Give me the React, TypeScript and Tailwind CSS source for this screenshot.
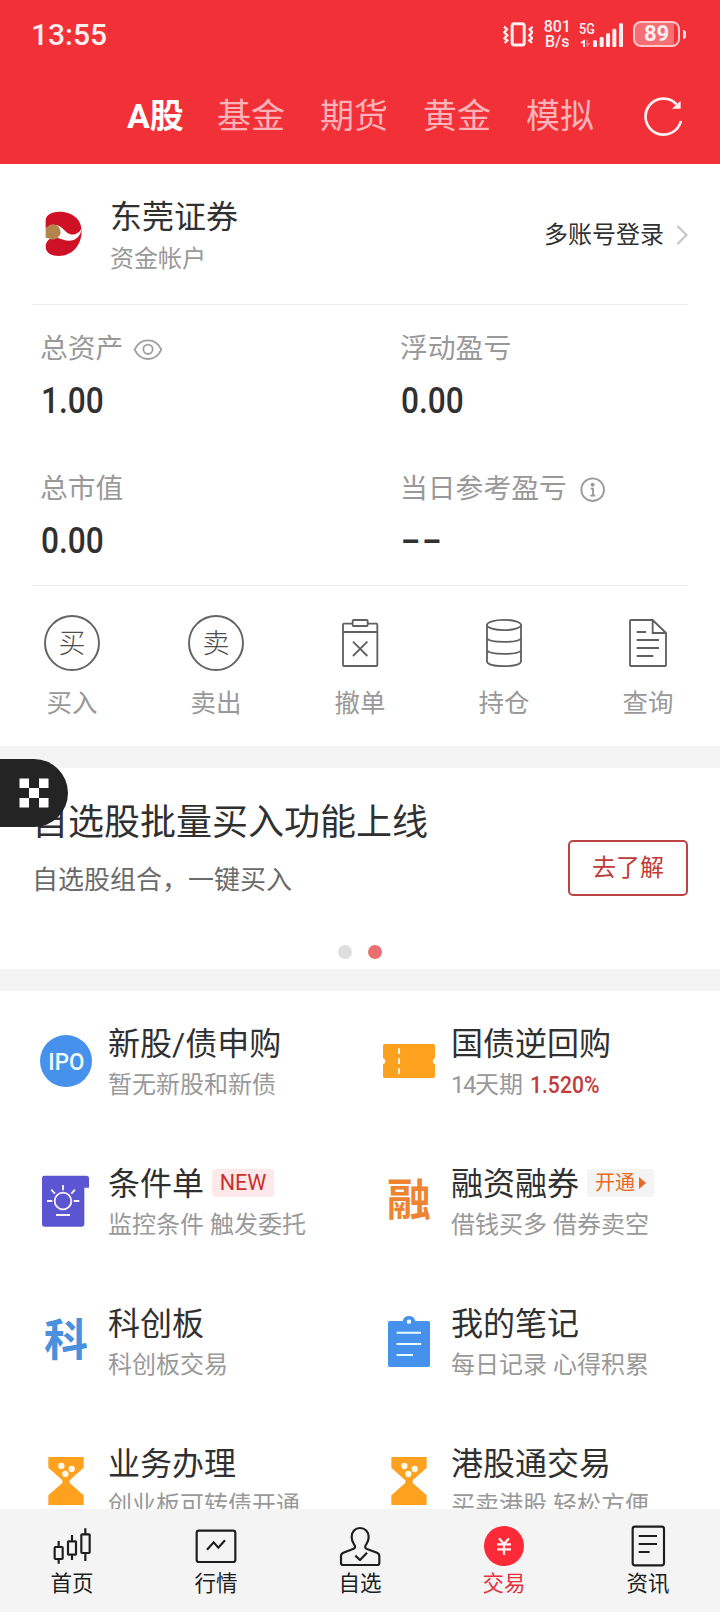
import type { ReactNode } from "react";
import clsx from "clsx";

/* ---------- header icons ---------- */

function VibrateIcon() {
  return (
    <svg viewBox="430 62 92 80" className="h-[26.7px] w-[30.7px]" fill="none" stroke="#ffeef0">
      <rect x="457.500" y="70" width="36" height="64" rx="6" strokeWidth="9" />
      <path d="M433 79l9 8-8 9 9 9-9 9 9 6-8 8" strokeWidth="7" />
      <path d="M519 79l-9 8 8 9-9 9 9 9-9 6 8 8" strokeWidth="7" />
    </svg>
  );
}

function SignalBars() {
  return (
    <svg viewBox="660 60 134 80" className="h-[26.7px] w-[44.7px]" fill="#ffeef0">
      <rect x="702" y="118" width="12" height="20" rx="4" />
      <rect x="722" y="108" width="12" height="30" rx="4" />
      <rect x="741" y="97" width="12" height="41" rx="4" />
      <rect x="760" y="83" width="12" height="55" rx="4" />
      <rect x="780" y="67" width="12" height="71" rx="4" />
      <path d="M678 138h-6v-11h-9l11-11h4z" />
      <path d="M682 116h4v10h9l-10 11h-3z" opacity=".4" />
    </svg>
  );
}

function RefreshIcon() {
  return (
    <svg viewBox="850 284 124 124" className="h-[41.3px] w-[41.3px]" fill="none">
      <path d="M951 312A54 54 0 1 0 964 362" stroke="#fff0f1" strokeWidth="8" />
      <path d="M963 301v24h-26z" fill="#fff0f1" />
    </svg>
  );
}

/* ---------- account icons ---------- */

function BrokerLogo() {
  return (
    <svg viewBox="136 123 112 138" className="h-[46px] w-[37.3px]">
      <path
        d="M138 176v-24c0-16 16-27 40-27 38 0 67 22 67 52-8 14-22 20-35 15-18-7-23-27-45-27-12 0-21 4-27 11z"
        fill="#cf1126"
      />
      <path
        d="M138 230c0-17 12-27 30-27 14 0 22 9 40 9 20 0 34-12 38-35 2 48-28 81-68 81-26 0-40-12-40-28z"
        fill="#cf1126"
      />
      <path d="M138 178a23 23 0 1 1 9 27l-9-2z" fill="#b4854a" />
    </svg>
  );
}

function EyeIcon() {
  return (
    <svg
      viewBox="402 505 90 70"
      className="mt-0.5 ml-2.5 h-[23.3px] w-[30px]"
      fill="none"
      stroke="#a0a0a0"
      strokeWidth="5.500"
    >
      <path d="M407 540c8-18 22-28 40-28s32 10 40 28c-8 18-22 28-40 28s-32-10-40-28z" />
      <circle cx="447" cy="539" r="14" />
    </svg>
  );
}

function InfoIcon() {
  return (
    <svg
      viewBox="664 109 76 76"
      className="mt-px ml-[13px] h-[25.3px] w-[25.3px]"
      fill="none"
      stroke="#999"
      strokeWidth="5.500"
    >
      <circle cx="702" cy="147" r="34" />
      <circle cx="702" cy="132" r="6" fill="#999" stroke="none" />
      <path d="M696 144h7v20M695 165h15" />
    </svg>
  );
}

/* ---------- quick action icons ---------- */

function CircleGlyph({ char }: { char: string }) {
  return (
    <div className="flex h-14 w-14 items-center justify-center rounded-full border-2 border-[#666] pt-0.5 text-[27px] leading-none font-light text-[#4c4c4c]">
      {char}
    </div>
  );
}

function CancelIcon() {
  return (
    <svg viewBox="996 525 168 168" className="h-14 w-14" fill="none" stroke="#606060" strokeWidth="5.500">
      <path d="M1058 551h-26q-3 0-3 3v121q0 3 3 3h97q3 0 3-3V554q0-3-3-3h-26M1029 576h103" />
      <rect x="1058" y="540" width="45" height="18" rx="3" />
      <path d="M1059 605l43 43M1102 605l-43 43" />
    </svg>
  );
}

function HoldingsIcon() {
  return (
    <svg viewBox="348 525 168 168" className="h-14 w-14" fill="none" stroke="#606060" strokeWidth="5.500">
      <ellipse cx="432" cy="555" rx="51" ry="15.500" />
      <path d="M381 555v110c6 18 96 18 102 0V555M381 595c8 14 94 14 102 0M381 631c8 14 94 14 102 0" />
    </svg>
  );
}

function QueryIcon() {
  return (
    <svg viewBox="780 525 168 168" className="h-14 w-14" fill="none" stroke="#606060" strokeWidth="5.500">
      <path d="M878 540h-65q-3 0-3 3v132q0 3 3 3h102q3 0 3-3v-96zM878 540v39h40" />
      <path d="M830 576h28M830 600h67M830 624h67M830 648h50" />
    </svg>
  );
}

/* ---------- service icons ---------- */

function IpoIcon() {
  return (
    <div className="flex h-[52px] w-[52px] items-center justify-center rounded-full bg-[#4691ec] pt-0.5 text-[24px] font-medium text-[#eefcff]">
      <span className="inline-block scale-x-[.93]">IPO</span>
    </div>
  );
}

function ConditionIcon() {
  return (
    <svg viewBox="120 553 156 156" className="h-[52px] w-[52px]">
      <path d="M133 555h126q8 0 8 8v28h-14v110q0 7-7 7H133q-7 0-7-7V562q0-7 7-7z" fill="#5b55d2" />
      <g fill="none" stroke="#f6f5ff" strokeWidth="5.500">
        <circle cx="189" cy="631" r="25" />
        <path d="M168 673h42M189 583v16M154 597l11 12M225 597l-11 12M141 631h16M221 631h17" />
      </g>
    </svg>
  );
}

function TicketIcon() {
  return (
    <svg viewBox="69 135 156 156" className="h-[52px] w-[52px]">
      <path
        d="M74 162h146q5 0 5 5v37a10 10 0 0 0 0 19v36q0 5-5 5H74q-5 0-5-5v-36a10 10 0 0 0 0-19v-37q0-5 5-5z"
        fill="#fea11f"
      />
      <path d="M117 175v17M117 205v17M117 235v17" stroke="#fff4d8" strokeWidth="6" />
    </svg>
  );
}

function NoteIcon() {
  return (
    <svg viewBox="69 195 156 156" className="h-[52px] w-[52px]">
      <path
        d="M89 213h39a19.500 19.500 0 0 1 38 0h39q5 0 5 5v128q0 5-5 5H89q-5 0-5-5V218q0-5 5-5z"
        fill="#4691ec"
      />
      <circle cx="147" cy="215" r="6.500" fill="#fff" />
      <path d="M110 248h73M110 282h73M110 315h49" stroke="#e8fdff" strokeWidth="6" />
    </svg>
  );
}

function HourglassIcon() {
  return (
    <svg viewBox="119 615 156 156" className="h-[52px] w-[52px]">
      <path d="M144 621h106v32l-42 38v8l42 37v29H144v-29l42-37v-8l-42-38z" fill="#fea11f" />
      <g fill="#fff8e4">
        <circle cx="183" cy="648" r="9.500" />
        <circle cx="214" cy="657" r="9.500" />
        <circle cx="195" cy="672" r="9.500" />
      </g>
    </svg>
  );
}

function GlyphIcon({ char, className }: { char: string; className: string }) {
  return (
    <div className={clsx("flex h-[52px] w-[52px] items-center justify-center text-[44px] leading-none font-bold", className)}>
      {char}
    </div>
  );
}

/* ---------- tab bar icons ---------- */

function HomeIcon() {
  return (
    <svg viewBox="144 816 144 144" className="h-12 w-12" fill="none" stroke="#1e1e1e" strokeWidth="6.500">
      <rect x="164" y="891" width="24" height="36" rx="2" />
      <rect x="204" y="874" width="24" height="40" rx="2" />
      <rect x="244" y="853" width="25" height="56" rx="2" />
      <path d="M176 873v18M176 927v14M216 855v19M216 914v16M256 835v18M256 909v24" />
    </svg>
  );
}

function MarketIcon() {
  return (
    <svg viewBox="576 816 144 144" className="h-12 w-12" fill="none" stroke="#1e1e1e" strokeWidth="6.500">
      <rect x="590" y="842" width="116" height="94" rx="7" />
      <path d="M621 899l20-22 14 16 20-22" />
    </svg>
  );
}

function WatchIcon() {
  return (
    <svg viewBox="1008 816 144 144" className="h-12 w-12" fill="none" stroke="#1e1e1e" strokeWidth="6.500" strokeLinejoin="round">
      <path d="M1080 834c15 0 26 11 26 27 0 14-5 18-9 25-3 5-1 9 4 11l30 11c5 2 7 5 7 10v21q0 6-6 6h-103q-6 0-6-6v-21c0-5 2-8 7-10l29-11c6-2 8-6 5-11-4-7-9-11-9-25 0-16 10-27 25-27z" />
      <path d="M1066 917l14 13 21-22" />
    </svg>
  );
}

function TradeIcon() {
  return (
    <svg viewBox="360 816 144 144" className="h-12 w-12">
      <circle cx="432" cy="888" r="60" fill="#fc2a38" />
      <path
        d="M417 865l15 17 15-17M432 882v33M411 883h42M411 898h42"
        fill="none"
        stroke="#fff0f0"
        strokeWidth="7"
      />
    </svg>
  );
}

function NewsIcon() {
  return (
    <svg viewBox="792 816 144 144" className="h-12 w-12" fill="none" stroke="#1e1e1e" strokeWidth="6.500">
      <rect x="818" y="830" width="94" height="116" rx="7" />
      <path d="M836 858h55M836 882h55M836 906h33" />
    </svg>
  );
}

/* ---------- data ---------- */

const tabs = ["基金", "期货", "黄金", "模拟"];

const quickActions = [
  { label: "买入", icon: <CircleGlyph char="买" /> },
  { label: "卖出", icon: <CircleGlyph char="卖" /> },
  { label: "撤单", icon: <CancelIcon /> },
  { label: "持仓", icon: <HoldingsIcon /> },
  { label: "查询", icon: <QueryIcon /> },
];

type Service = { title: string; desc: ReactNode; icon: ReactNode; badge?: ReactNode };

const services: Service[] = [
  { title: "新股/债申购", desc: "暂无新股和新债", icon: <IpoIcon /> },
  {
    title: "国债逆回购",
    desc: (
      <>
        <span className="tracking-[-1.5px]">14</span>天期{" "}
        <span className="ml-px inline-block origin-left scale-x-[.88] font-medium text-[#c23b3b]">1.520%</span>
      </>
    ),
    icon: <TicketIcon />,
  },
  {
    title: "条件单",
    desc: "监控条件 触发委托",
    icon: <ConditionIcon />,
    badge: <span className="w-[62px] bg-[#fde9e9] text-center text-[21.500px] text-[#cc2f2c]">NEW</span>,
  },
  {
    title: "融资融券",
    desc: "借钱买多 借券卖空",
    icon: <GlyphIcon char="融" className="text-[#ee8431]" />,
    badge: (
      <span className="flex w-[67px] items-center gap-1 bg-[#f4f4f4] pl-2 text-[#ea6a22]">
        开通
        <svg viewBox="0 0 7 12" className="h-3 w-[7px]" fill="#ea6a22">
          <path d="M0 0l7 6-7 6z" />
        </svg>
      </span>
    ),
  },
  { title: "科创板", desc: "科创板交易", icon: <GlyphIcon char="科" className="text-[#4a90dc]" /> },
  { title: "我的笔记", desc: "每日记录 心得积累", icon: <NoteIcon /> },
  { title: "业务办理", desc: "创业板可转债开通", icon: <HourglassIcon /> },
  { title: "港股通交易", desc: "买卖港股 轻松方便", icon: <HourglassIcon /> },
];

const navItems = [
  { label: "首页", icon: <HomeIcon /> },
  { label: "行情", icon: <MarketIcon /> },
  { label: "自选", icon: <WatchIcon /> },
  { label: "交易", icon: <TradeIcon />, active: true },
  { label: "资讯", icon: <NewsIcon /> },
];

function Stat({ label, value, icon }: { label: string; value: string; icon?: ReactNode }) {
  return (
    <div className="h-[140px] pt-[26px]">
      <div className="flex h-9 items-center text-[27.800px] text-[#999]">
        {label}
        {icon}
      </div>
      <div className="mt-3.5 pl-px text-[36px] leading-10 font-medium text-[#303030]">
        <span
          className={clsx(
            "inline-block origin-left",
            value === "--" ? "scale-x-[1.6] tracking-[1px]" : "scale-x-[.88]",
          )}
        >
          {value}
        </span>
      </div>
    </div>
  );
}

export default function App() {
  return (
    <div className="relative flex h-[1612px] w-[720px] flex-col overflow-hidden bg-white font-[Roboto,'Noto_Sans_CJK_SC',sans-serif] text-[#303030]">
      {/* status bar + market tabs */}
      <header className="h-[164px] shrink-0 bg-[#f13038] text-[#ffeef0]">
        <div className="flex h-[68px] items-center pr-[34px] pl-[31px]">
          <span className="text-[30px] font-medium">13:55</span>
          <div className="ml-auto flex items-center">
            <VibrateIcon />
            <div className="ml-[10px] w-[28px] text-center text-[16px] leading-[15px] font-medium">
              801
              <br />
              B/s
            </div>
            <div className="relative ml-[8px]">
              <SignalBars />
              <span className="absolute top-0 left-0 origin-left scale-x-[.84] text-[15px] leading-4 font-medium">5G</span>
            </div>
            <div className="ml-[9px] flex items-center gap-[3px]">
              <div className="relative flex h-[26px] w-[47px] items-center justify-center overflow-hidden rounded-[8px] border-2 border-[#ffc9cc]">
                <div className="absolute inset-y-0 left-0 w-[39px] bg-white/30" />
                <span className="relative text-[22px] leading-none font-bold">89</span>
              </div>
              <div className="h-[9px] w-[3px] rounded-r bg-[#ffe0e2]" />
            </div>
          </div>
        </div>
        <nav className="flex h-24 items-center pr-9 pl-[127px] text-[34px]">
          <span className="w-[90px] font-bold text-white">A股</span>
          <div className="flex gap-[35px] text-[#ffb3b8]">
            {tabs.map((t) => (
              <span key={t}>{t}</span>
            ))}
          </div>
          <div className="ml-auto">
            <RefreshIcon />
          </div>
        </nav>
      </header>

      {/* account */}
      <section className="shrink-0 px-8">
        <div className="flex h-[141px] border-b border-[#ebebeb] pt-[33px]">
          <div className="w-[78px] pt-[14px] pl-[13px]">
            <BrokerLogo />
          </div>
          <div>
            <div className="text-[32px] leading-10">东莞证券</div>
            <div className="mt-1.5 text-[24px] leading-8 text-[#999]">资金帐户</div>
          </div>
          <div className="ml-auto flex h-[76px] items-center gap-3">
            <span className="text-[24px]">多账号登录</span>
            <svg viewBox="0 0 12 20" className="h-5 w-3" fill="none" stroke="#c6c6c6" strokeWidth="2.200">
              <path d="M1.500 1l9 9-9 9" />
            </svg>
          </div>
        </div>
        <div className="grid h-[281px] grid-cols-[360px_1fr] border-b border-[#ebebeb] pl-2">
          <Stat label="总资产" value="1.00" icon={<EyeIcon />} />
          <Stat label="浮动盈亏" value="0.00" />
          <Stat label="总市值" value="0.00" />
          <Stat label="当日参考盈亏" value="--" icon={<InfoIcon />} />
        </div>
      </section>

      {/* quick actions */}
      <section className="grid h-40 shrink-0 grid-cols-5 pt-[29px]">
        {quickActions.map((a) => (
          <div key={a.label} className="flex flex-col items-center">
            {a.icon}
            <span className="mt-3.5 text-[25.500px] leading-9 text-[#999]">{a.label}</span>
          </div>
        ))}
      </section>

      {/* banner */}
      <section className="relative h-[245px] shrink-0 border-y-[22px] border-[#f4f4f4] px-8 pt-[33px]">
        <div className="flex justify-between">
          <div>
            <h2 className="text-[36px] leading-[44px]">自选股批量买入功能上线</h2>
            <p className="mt-[17px] text-[26px] leading-9 text-[#6a6a6a]">自选股组合，一键买入</p>
          </div>
          <button className="mt-[39px] h-14 w-[120px] rounded-[5px] border-2 border-[#bb4542] text-[24px] text-[#bf3a37]">
            去了解
          </button>
        </div>
        <div className="mt-[47px] flex justify-center gap-4">
          <span className="h-3.5 w-3.5 rounded-full bg-[#dedede]" />
          <span className="h-3.5 w-3.5 rounded-full bg-[#ea6f70]" />
        </div>
      </section>

      {/* services */}
      <section className="grid min-h-0 flex-1 auto-rows-[140px] grid-cols-[343px_1fr] overflow-hidden pl-10">
        {services.map((s) => (
          <div key={s.title} className="flex items-center gap-4">
            {s.icon}
            <div className="pt-[3px]">
              <div className="flex h-10 items-center gap-2">
                <h3 className="text-[32px] leading-10">{s.title}</h3>
                {s.badge && (
                  <div className="mb-0.5 flex overflow-hidden rounded-[4px] text-[20px] leading-7">{s.badge}</div>
                )}
              </div>
              <p className="mt-[5px] text-[24px] leading-8 whitespace-nowrap text-[#999]">{s.desc}</p>
            </div>
          </div>
        ))}
      </section>

      {/* bottom tab bar */}
      <footer className="grid h-[103px] shrink-0 grid-cols-5 bg-[#f4f4f4] pt-[13px]">
        {navItems.map((n) => (
          <div key={n.label} className="flex flex-col items-center">
            {n.icon}
            <span className={clsx("text-[21.500px] leading-7", n.active ? "text-[#e5303c]" : "text-[#1e1e1e]")}>
              {n.label}
            </span>
          </div>
        ))}
      </footer>

      {/* floating shortcut */}
      <div className="absolute top-[759px] left-0 flex h-[68px] w-[68px] items-center rounded-r-full bg-[#242424] pl-[19px]">
        <svg viewBox="0 0 30 30" className="h-[30px] w-[30px]" fill="#fff">
          <path d="M.5.500h9.500v9.500H.5zM20 .500h9.500v9.500H20zM10 10h10v10H10zM.5 20h9.500v9.500H.5zM20 20h9.500v9.500H20z" />
        </svg>
      </div>
    </div>
  );
}
